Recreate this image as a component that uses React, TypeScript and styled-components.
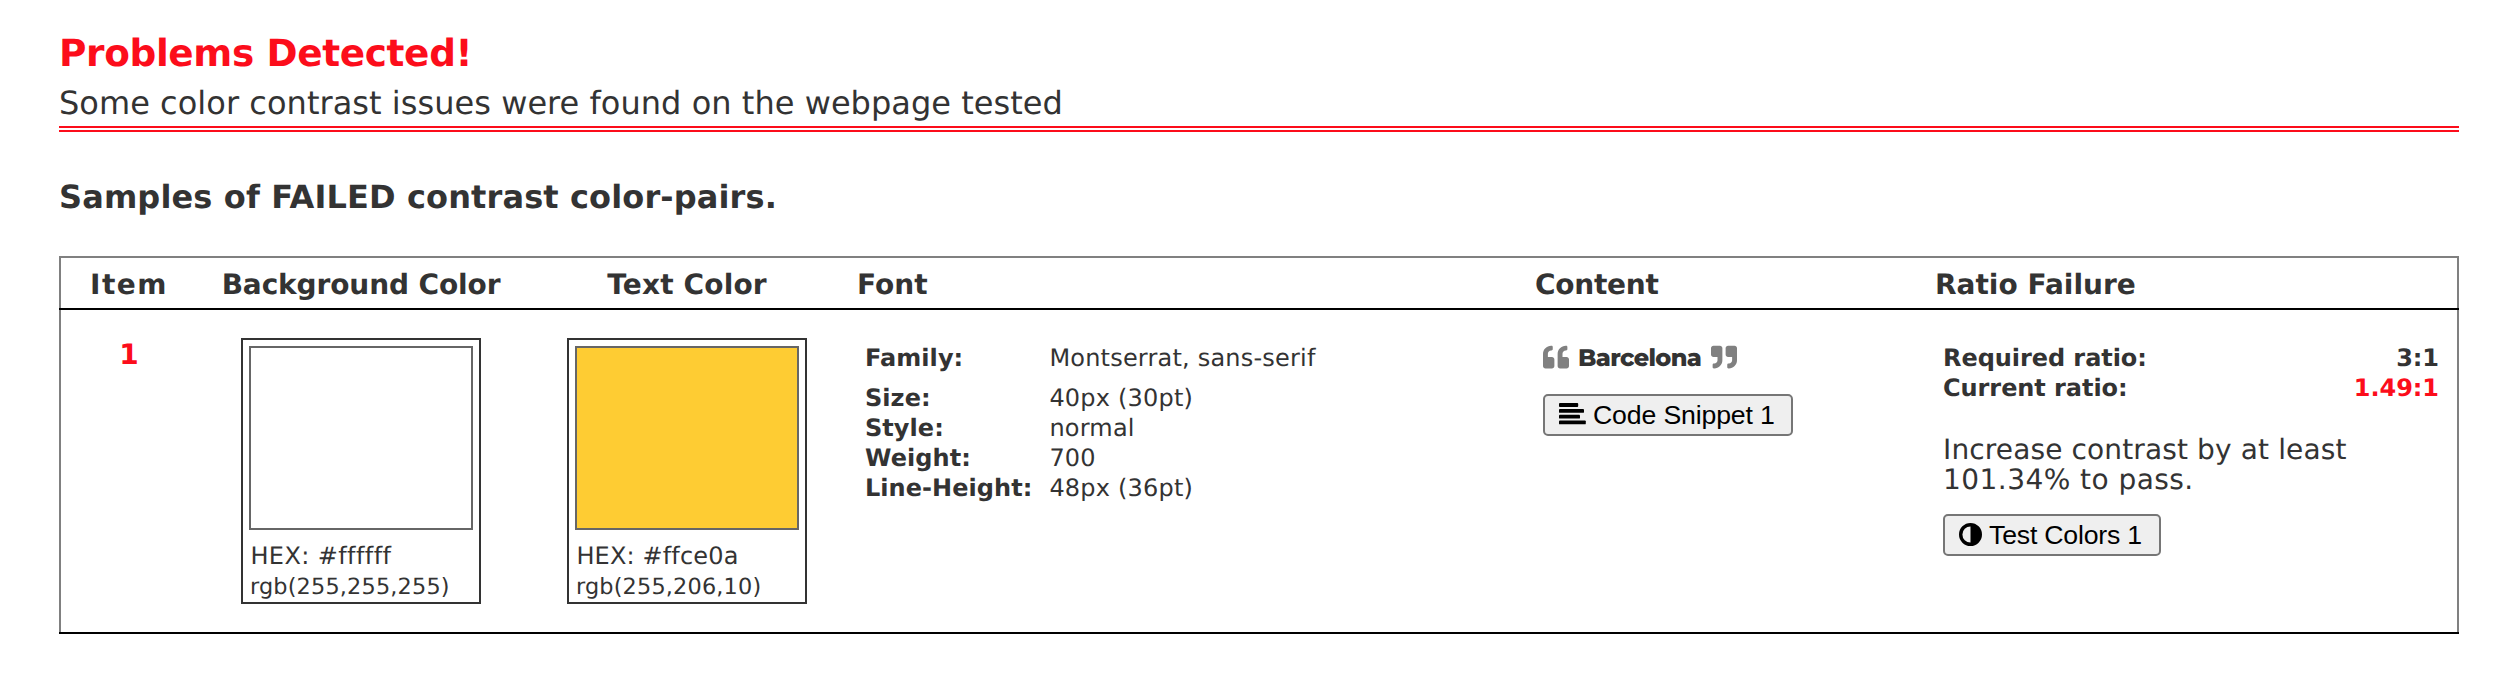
import React from 'react';
import styled, { createGlobalStyle } from 'styled-components';
import { FaQuoteLeft, FaQuoteRight } from 'react-icons/fa';

const RED = '#fc0d1b';
const INK = '#333';
const GRAY = '#808080';

const GlobalStyle = createGlobalStyle`
  * { box-sizing: border-box; }
  body {
    margin: 0;
    background: #fff;
    color: ${INK};
    font-family: Verdana, "DejaVu Sans", sans-serif;
    text-rendering: geometricPrecision;
  }
  svg { display: block; flex: none; }
`;

const Page = styled.main`
  width: 2518px;
  height: 692px;
  padding: 31px 59px 0;
`;

const Title = styled.h1`
  margin: 0;
  color: ${RED};
  font-size: 37.44px;
  line-height: 44px;
  letter-spacing: -0.37px;
`;

const Subtitle = styled.p`
  margin: 5px 0 0;
  height: 52px;
  border-bottom: 6px double ${RED};
  font-size: 32px;
  line-height: 46px;
  letter-spacing: 0.04px;
`;

const SectionTitle = styled.h2`
  margin: 45px 0 39px;
  font-size: 32px;
  line-height: 40px;
  letter-spacing: 0.13px;
`;

const columns = '136px 328px 324px 678px 400px 530px';

const TableHead = styled.div`
  display: grid;
  grid-template-columns: ${columns};
  height: 52px;
  border: 2px solid ${GRAY};
  border-bottom: 0;
`;

const Rule = styled.div`
  height: 2px;
  background: #000;
`;

const HeadCell = styled.div<{ $center?: boolean; $spacing?: number }>`
  padding: ${p => (p.$center ? '3px 0 0' : '3px 8px 0')};
  font-size: 28px;
  font-weight: 700;
  line-height: 47px;
  white-space: nowrap;
  text-align: ${p => (p.$center ? 'center' : 'left')};
  letter-spacing: ${p => p.$spacing ?? 0}px;
`;

const TableRow = styled.div`
  display: grid;
  grid-template-columns: ${columns};
  height: 322px;
  border: solid ${GRAY};
  border-width: 0 2px;
`;

const ItemNumber = styled.div`
  padding-top: 29px;
  color: ${RED};
  font-size: 28px;
  font-weight: 700;
  line-height: 32px;
  text-align: center;
`;

const SwatchCell = styled.div`
  display: flex;
  justify-content: center;
  padding-top: 28px;
`;

const SwatchCard = styled.div`
  width: 240px;
  height: 266px;
  padding: 6px;
  border: 2px solid ${INK};
  white-space: nowrap;
`;

const Swatch = styled.div<{ $color: string }>`
  height: 184px;
  margin-bottom: 10px;
  border: 2px solid #666;
  background: ${p => p.$color};
`;

const HexText = styled.div<{ $spacing: number }>`
  padding-left: 1.4px;
  font-size: 24px;
  line-height: 32px;
  letter-spacing: ${p => p.$spacing}px;
`;

const RgbText = styled.div`
  padding-left: 1px;
  font-size: 22.4px;
  line-height: 30px;
  letter-spacing: 0.16px;
`;

const DetailCell = styled.div`
  padding: 33px 18px 0 16px;
  font-size: 24px;
  line-height: 30px;
`;

const FontRow = styled.div<{ $gap?: boolean }>`
  display: grid;
  grid-template-columns: 184px 1fr;
  margin-bottom: ${p => (p.$gap ? 10 : 0)}px;
`;

const Label = styled.strong`
  letter-spacing: 0.05px;
`;

const Value = styled.span`
  padding-left: 0.4px;
  letter-spacing: 0.2px;
`;

const Quote = styled.div`
  display: flex;
  align-items: flex-start;
  margin-top: 1px;
  color: ${GRAY};

  svg {
    width: 26px;
    height: 26px;
  }
`;

const QuotedText = styled.span`
  margin: 0 10px 0 9px;
  color: ${INK};
  font-family: Montserrat, Inter, sans-serif;
  font-weight: 800;
  letter-spacing: -0.65px;
`;

const Button = styled.button<{ $width: number; $top: number; $spacing: number }>`
  display: flex;
  align-items: center;
  gap: 7px;
  width: ${p => p.$width}px;
  height: 42px;
  margin: ${p => p.$top}px 0 0;
  padding: 0 0 0 14px;
  border: 2px solid #767676;
  border-radius: 5px;
  background: #efefef;
  color: #000;
  font: 26.67px "Liberation Sans", Arial, sans-serif;
  letter-spacing: ${p => p.$spacing}px;
  white-space: nowrap;
`;

const RatioRow = styled.div<{ $failed?: boolean }>`
  display: flex;
  justify-content: space-between;
  font-weight: 700;
  letter-spacing: -0.06px;

  span:last-child {
    color: ${p => (p.$failed ? RED : INK)};
  }
`;

const Advice = styled.p`
  margin: 32px 0 0;
  font-size: 28px;
  line-height: 30px;
`;

const AdviceLine = styled.span<{ $spacing: number }>`
  display: block;
  white-space: nowrap;
  letter-spacing: ${p => p.$spacing}px;
`;

const LinesIcon = () => (
  <svg width="27" height="24" viewBox="0 0 27 24" fill="currentColor">
    <rect x="0" y="0" width="19.2" height="3.9" rx="0.9" />
    <rect x="0" y="5.9" width="25" height="3.9" rx="0.9" />
    <rect x="0" y="11.7" width="21" height="3.9" rx="0.9" />
    <rect x="0" y="17.4" width="26.8" height="3.9" rx="0.9" />
  </svg>
);

const ContrastIcon = () => (
  <svg width="23" height="24" viewBox="0 0 23 24" fill="currentColor">
    <path
      fillRule="evenodd"
      d="M11.5 0a11.5 11.5 0 1 1 0 23a11.5 11.5 0 1 1 0-23zM11.5 3.4a8.1 8.1 0 0 0 0 16.2z"
    />
  </svg>
);

const fontDetails = [
  ['Family:', 'Montserrat, sans-serif'],
  ['Size:', '40px (30pt)'],
  ['Style:', 'normal'],
  ['Weight:', '700'],
  ['Line-Height:', '48px (36pt)'],
];

export default function App() {
  return (
    <>
      <GlobalStyle />
      <Page>
        <Title>Problems Detected!</Title>
        <Subtitle>Some color contrast issues were found on the webpage tested</Subtitle>
        <SectionTitle>Samples of FAILED contrast color-pairs.</SectionTitle>
        <TableHead>
          <HeadCell $center $spacing={1.5}>Item</HeadCell>
          <HeadCell $center $spacing={-0.12}>Background Color</HeadCell>
          <HeadCell $center $spacing={0.15}>Text Color</HeadCell>
          <HeadCell>Font</HeadCell>
          <HeadCell $spacing={-0.25}>Content</HeadCell>
          <HeadCell>Ratio Failure</HeadCell>
        </TableHead>
        <Rule />
        <TableRow>
          <ItemNumber>1</ItemNumber>
          <SwatchCell>
            <SwatchCard>
              <Swatch $color="#fff" />
              <HexText $spacing={0.4}>HEX: #ffffff</HexText>
              <RgbText>rgb(255,255,255)</RgbText>
            </SwatchCard>
          </SwatchCell>
          <SwatchCell>
            <SwatchCard>
              <Swatch $color="#fecc33" />
              <HexText $spacing={0.15}>HEX: #ffce0a</HexText>
              <RgbText>rgb(255,206,10)</RgbText>
            </SwatchCard>
          </SwatchCell>
          <DetailCell>
            {fontDetails.map(([label, value], i) => (
              <FontRow key={label} $gap={i === 0}>
                <Label>{label}</Label>
                <Value>{value}</Value>
              </FontRow>
            ))}
          </DetailCell>
          <DetailCell>
            <Quote>
              <FaQuoteLeft />
              <QuotedText>Barcelona</QuotedText>
              <FaQuoteRight />
            </Quote>
            <Button $width={250} $top={20} $spacing={-0.15}>
              <LinesIcon />
              Code Snippet 1
            </Button>
          </DetailCell>
          <DetailCell>
            <RatioRow>
              <span>Required ratio:</span>
              <span>3:1</span>
            </RatioRow>
            <RatioRow $failed>
              <span>Current ratio:</span>
              <span>1.49:1</span>
            </RatioRow>
            <Advice>
              <AdviceLine $spacing={0.13}>Increase contrast by at least</AdviceLine>
              <AdviceLine $spacing={0.45}>101.34% to pass.</AdviceLine>
            </Advice>
            <Button $width={218} $top={19} $spacing={-0.2}>
              <ContrastIcon />
              Test Colors 1
            </Button>
          </DetailCell>
        </TableRow>
        <Rule />
      </Page>
    </>
  );
}
